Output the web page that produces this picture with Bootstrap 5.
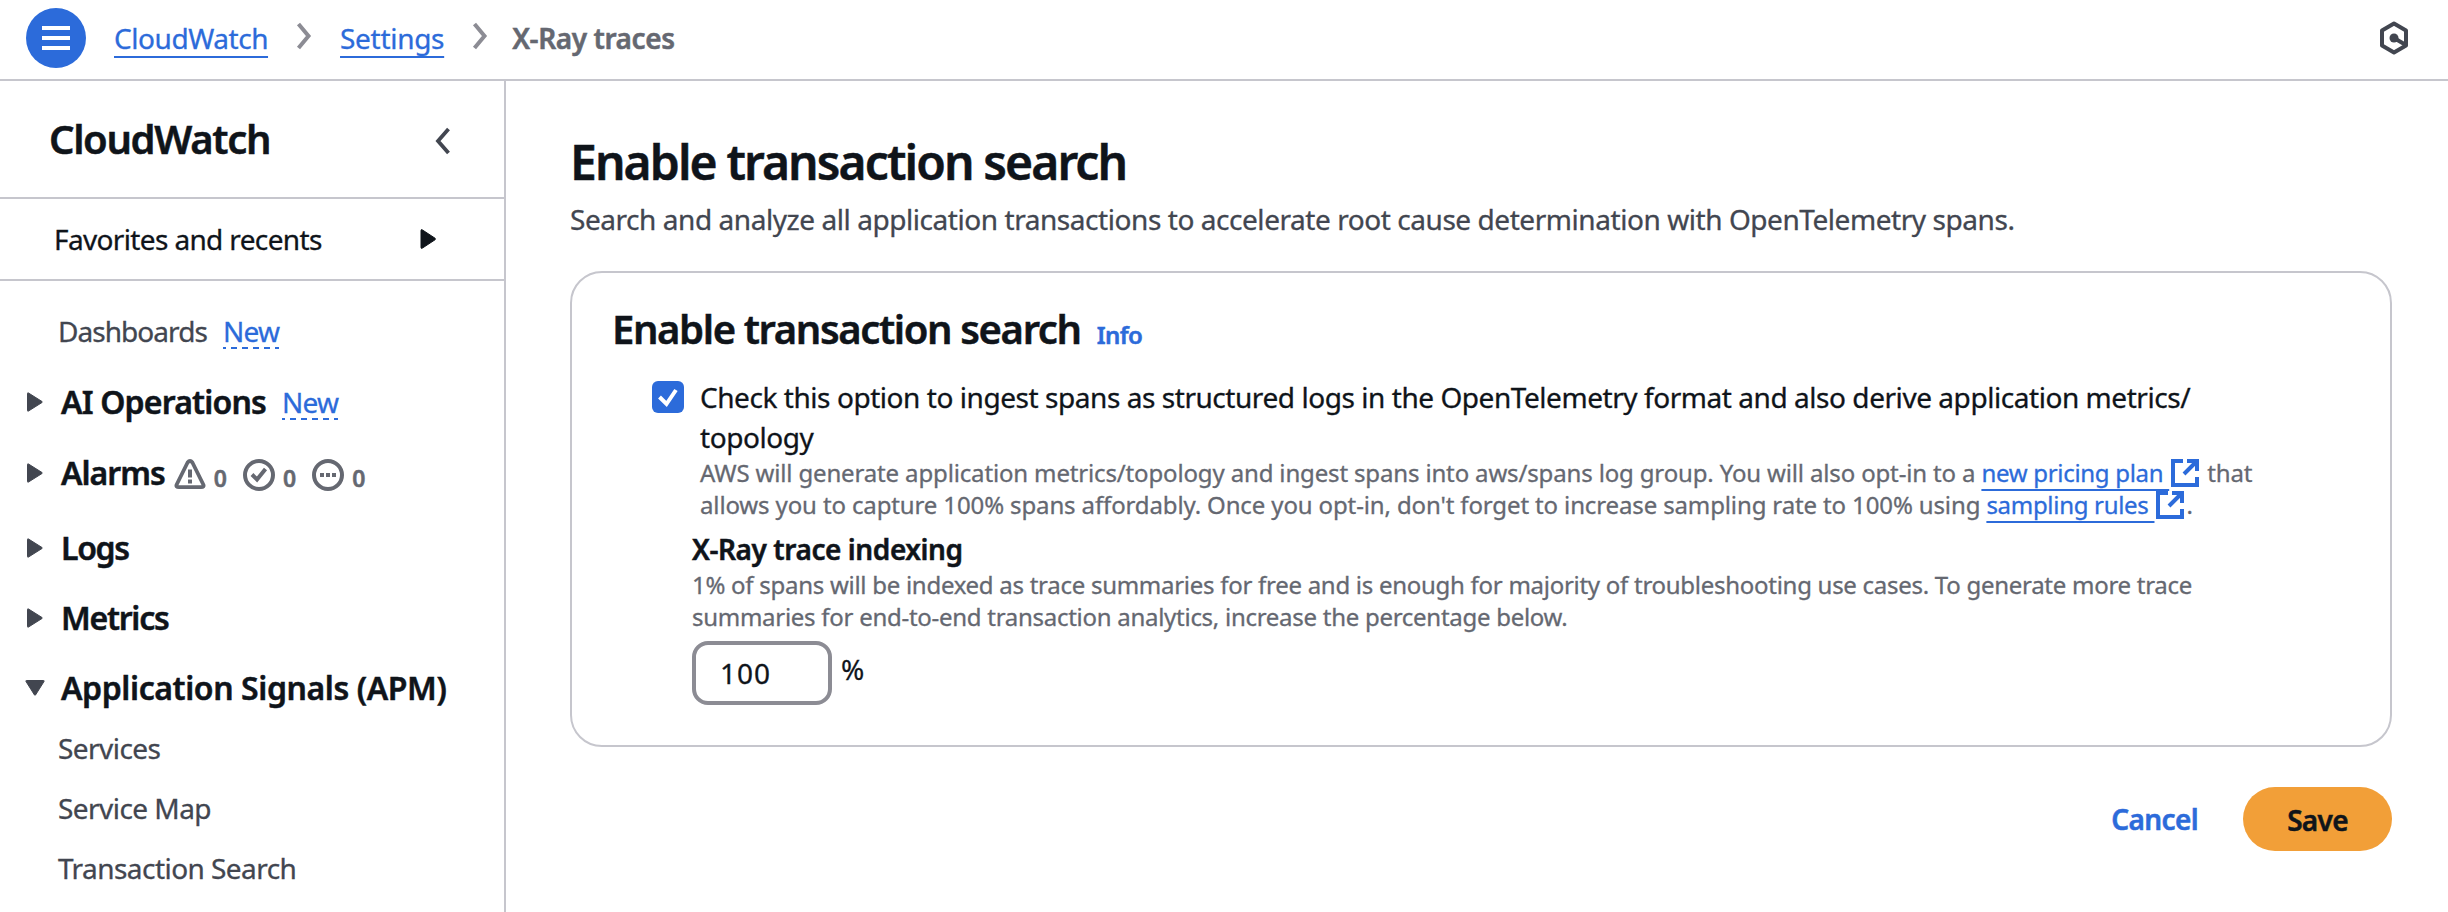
<!DOCTYPE html>
<html lang="en">
<head>
<meta charset="utf-8">
<meta name="viewport" content="width=device-width, initial-scale=1">
<title>Enable transaction search</title>
<link href="https://cdn.jsdelivr.net/npm/bootstrap@5.3.0/dist/css/bootstrap.min.css" rel="stylesheet">
<style>
:root{--ink:#0f141a;--body:#424650;--muted:#656871;--line:#c6c6cd;--blue:#2c6bda}
body{font-family:"Noto Sans","Open Sans",sans-serif;font-size:28px;line-height:40px;color:var(--ink);background:#fff;height:912px;overflow:hidden;-webkit-text-stroke:.3px}
svg{display:block;flex:none}
a{color:var(--blue);text-decoration-thickness:2px;text-underline-offset:7px;text-decoration-skip-ink:none;white-space:nowrap}
.fw-semi{font-weight:600;-webkit-text-stroke:.5px}
.topbar{height:81px;border-bottom:2px solid var(--line);padding:0 39px 3px 26px}
.menu-btn{width:60px;height:60px;background:var(--blue);border:0;padding:0;margin-right:28px}
.sep{margin-top:-4px}
.ls-a{letter-spacing:-.44px}
.ls-b{letter-spacing:-.3px}
.here{color:var(--muted);letter-spacing:-.42px}
.side{width:506px;border-right:2px solid var(--line);height:831px}
.side-title{height:118px;border-bottom:2px solid var(--line);padding:0 53px 0 49px;font-size:40px;letter-spacing:-1.36px}
.side-title svg{margin-top:4px}
.side-fav{height:82px;border-bottom:2px solid var(--line);padding:0 68px 0 54px;letter-spacing:-.64px}
.item{height:60px;padding-left:58px;color:var(--body);letter-spacing:-.55px}
.group{height:70px;padding-left:25px;font-size:32px}
.group svg.tri{margin-right:16px}
.new{font-size:28px;font-weight:400;letter-spacing:-.75px;color:var(--blue);line-height:36px;height:36px;margin-left:16px;-webkit-text-stroke:.3px;
 background:repeating-linear-gradient(90deg,var(--blue) 0 6px,transparent 6px 11px) -3px 100%/110% 2px no-repeat}
.count{font-size:23px;color:var(--muted);line-height:32px;padding-top:9px}
.main{padding:51px 56px 0 64px}
h1{font-size:48px;line-height:60px;letter-spacing:-1.9px;margin:0 0 7px}
.sub{color:var(--body);letter-spacing:-.44px;margin:0 0 32px}
.panel{height:476px;border:2px solid var(--line);border-radius:32px;padding:32px 40px}
h2{font-size:40px;line-height:48px;height:48px;letter-spacing:-1.38px;margin:0}
.info{font-size:24px;letter-spacing:-.6px;text-decoration:none;margin-left:16px}
.check{width:32px;height:32px;border-radius:6px;background:var(--blue);margin:4px 16px 0 40px}
.opt{letter-spacing:-.445px}
.desc{font-size:24px;line-height:32px;color:var(--muted);white-space:nowrap;letter-spacing:-.15px}
.desc.tail{letter-spacing:-.13px}
.desc a{letter-spacing:-.3px}
.desc-2{letter-spacing:-.275px}
.ext{display:inline-block;vertical-align:-5px}
.num{width:140px;height:64px;border:4px solid #8c8c94;border-radius:16px;padding:0 0 0 24px;font-size:28px;letter-spacing:1px;color:var(--ink)}
.save{width:149px;height:64px;background:#f29f38;color:var(--ink);font-size:28px;letter-spacing:-.7px;padding:1px 0 0}
.save:hover{background:#f29f38}
</style>
</head>
<body>
<header class="topbar d-flex align-items-center">
  <button class="menu-btn rounded-circle d-flex align-items-center justify-content-center" aria-label="Menu">
    <svg width="28" height="24"><path d="M0 2h28M0 12h28M0 22h28" stroke="#fff" stroke-width="4"/></svg>
  </button>
  <a href="#" class="ls-a">CloudWatch</a>
  <svg class="sep ms-4 me-4" width="24" height="30" viewBox="0 0 24 30"><path d="M6.500 3l10 12l-10 12" fill="none" stroke="#8c8c94" stroke-width="4"/></svg>
  <a href="#" class="ls-b">Settings</a>
  <svg class="sep ms-4 me-4" width="20" height="30" viewBox="0 0 20 30"><path d="M6.500 3l10 12l-10 12" fill="none" stroke="#8c8c94" stroke-width="4"/></svg>
  <span class="here fw-semi">X-Ray traces</span>
  <svg class="ms-auto" width="30" height="34" viewBox="0 0 30 34"><path d="M15 2.500L27 9.500V24.500L15 31.500L3 24.500V9.500Z" fill="none" stroke="#424650" stroke-width="4" stroke-linejoin="round"/><circle cx="15" cy="17" r="4.500" fill="#424650"/><path d="M15 17l11 6.500" stroke="#424650" stroke-width="4"/></svg>
</header>
<div class="d-flex">
  <nav class="side flex-shrink-0">
    <div class="side-title fw-semi d-flex align-items-center justify-content-between">CloudWatch
      <svg width="16" height="28" viewBox="0 0 16 28"><path d="M13.500 2L3 14l10.500 12" fill="none" stroke="#424650" stroke-width="3.800"/></svg></div>
    <div class="side-fav d-flex align-items-center justify-content-between">Favorites and recents
      <svg width="16" height="20"><path d="M1 1.500Q1 0 2.500 1L15 9.200Q16 10 15 10.800L2.500 19Q1 20 1 18.500Z" fill="#0f141a" stroke="#0f141a"/></svg></div>
    <div class="item d-flex align-items-center" style="margin-top:20px;letter-spacing:-.95px">Dashboards<span class="new">New</span></div>
    <div class="group fw-semi d-flex align-items-center" style="margin-top:6px;letter-spacing:-.81px">
      <svg class="tri" width="20" height="20"><path d="M2.500 1.500Q2.500 .5 3.500 1L17 9.500Q17.800 10 17 10.500L3.500 19Q2.500 19.500 2.500 18.500Z" fill="#424650" stroke="#424650"/></svg>AI Operations<span class="new">New</span></div>
    <div class="group fw-semi d-flex align-items-center" style="height:72px;letter-spacing:-.98px">
      <svg class="tri" width="20" height="20"><path d="M2.500 1.500Q2.500 .5 3.500 1L17 9.500Q17.800 10 17 10.500L3.500 19Q2.500 19.500 2.500 18.500Z" fill="#424650" stroke="#424650"/></svg>Alarms
      <svg style="margin:4px 8px 0 9px" width="32" height="32" viewBox="0 0 32 32"><path d="M13.600 3.500Q16 .5 18.400 3.500L29.300 25.500Q30.500 28.200 27 28.200H5Q1.500 28.200 2.700 25.500Z" fill="none" stroke="#656871" stroke-width="3.800" stroke-linejoin="round"/><path d="M16 10.500v8M16 20.500v4" stroke="#656871" stroke-width="4"/></svg><span class="count">0</span>
      <svg style="margin:4px 8px 0 17px" width="32" height="32" viewBox="0 0 32 32"><circle cx="16" cy="16" r="14" fill="none" stroke="#656871" stroke-width="4"/><path d="M9 15.500l5 5l8.500-10.500" fill="none" stroke="#656871" stroke-width="4"/></svg><span class="count">0</span>
      <svg style="margin:4px 8px 0 17px" width="32" height="32" viewBox="0 0 32 32"><circle cx="16" cy="16" r="14" fill="none" stroke="#656871" stroke-width="4"/><path d="M8 16h16" stroke="#656871" stroke-width="4" stroke-dasharray="4 2"/></svg><span class="count">0</span>
    </div>
    <div class="group fw-semi d-flex align-items-center" style="margin-top:4px;letter-spacing:-1.3px">
      <svg class="tri" width="20" height="20"><path d="M2.500 1.500Q2.500 .5 3.500 1L17 9.500Q17.800 10 17 10.500L3.500 19Q2.500 19.500 2.500 18.500Z" fill="#424650" stroke="#424650"/></svg>Logs</div>
    <div class="group fw-semi d-flex align-items-center" style="letter-spacing:-1.24px">
      <svg class="tri" width="20" height="20"><path d="M2.500 1.500Q2.500 .5 3.500 1L17 9.500Q17.800 10 17 10.500L3.500 19Q2.500 19.500 2.500 18.500Z" fill="#424650" stroke="#424650"/></svg>Metrics</div>
    <div class="group fw-semi d-flex align-items-center" style="height:60px;margin-top:5px;letter-spacing:-.41px">
      <svg class="tri" width="20" height="20"><path d="M1.500 2.500Q.5 2.500 1 3.500L9.500 17Q10 17.800 10.500 17L19 3.500Q19.500 2.500 18.500 2.500Z" fill="#424650" stroke="#424650"/></svg>Application Signals (APM)</div>
    <div class="item d-flex align-items-center">Services</div>
    <div class="item d-flex align-items-center">Service Map</div>
    <div class="item d-flex align-items-center">Transaction Search</div>
  </nav>
  <main class="main flex-grow-1">
    <h1 class="fw-semi">Enable transaction search</h1>
    <p class="sub text-nowrap">Search and analyze all application transactions to accelerate root cause determination with OpenTelemetry spans.</p>
    <section class="panel">
      <h2 class="fw-semi d-flex align-items-baseline">Enable transaction search <a href="#" class="info">Info</a></h2>
      <div class="d-flex" style="margin-top:24px">
        <span class="check"><svg width="32" height="32"><path d="M7.500 16l7 7l9.500-14" fill="none" stroke="#fff" stroke-width="4"/></svg></span>
        <div class="text-nowrap">
          <div class="opt">Check this option to ingest spans as structured logs in the OpenTelemetry format and also derive application metrics/<br>topology</div>
          <div class="desc">AWS will generate application metrics/topology and ingest spans into aws/spans log group. You will also opt-in to a <a href="#">new pricing plan&nbsp;</a><svg class="ext" width="32" height="28" viewBox="0 0 32 28"><path d="M14 2H4V26H28V18M18 2H28V12M27 3L15 15" fill="none" stroke="#2c6bda" stroke-width="4"/></svg> that</div>
          <div class="desc tail">allows you to capture 100% spans affordably. Once you opt-in, don't forget to increase sampling rate to 100% using <a href="#">sampling rules&nbsp;</a><svg class="ext" width="32" height="28" viewBox="0 0 32 28"><path d="M14 2H4V26H28V18M18 2H28V12M27 3L15 15" fill="none" stroke="#2c6bda" stroke-width="4"/></svg>.</div>
        </div>
      </div>
      <div style="margin:8px 0 0 80px">
        <div class="fw-semi here text-reset">X-Ray trace indexing</div>
        <div class="desc desc-2">1% of spans will be indexed as trace summaries for free and is enough for majority of troubleshooting use cases. To generate more trace<br>summaries for end-to-end transaction analytics, increase the percentage below.</div>
        <div class="d-flex" style="margin-top:8px">
          <input class="num" type="text" value="100" aria-label="Percentage">
          <span style="margin:8px 0 0 9px">%</span>
        </div>
      </div>
    </section>
    <div class="d-flex justify-content-end align-items-center" style="margin-top:40px">
      <a href="#" class="fw-semi text-decoration-none" style="letter-spacing:-.6px;margin-right:45px">Cancel</a>
      <button class="save btn fw-semi rounded-pill border-0">Save</button>
    </div>
  </main>
</div>
<script src="https://cdn.jsdelivr.net/npm/bootstrap@5.3.0/dist/js/bootstrap.bundle.min.js"></script>
</body>
</html>
